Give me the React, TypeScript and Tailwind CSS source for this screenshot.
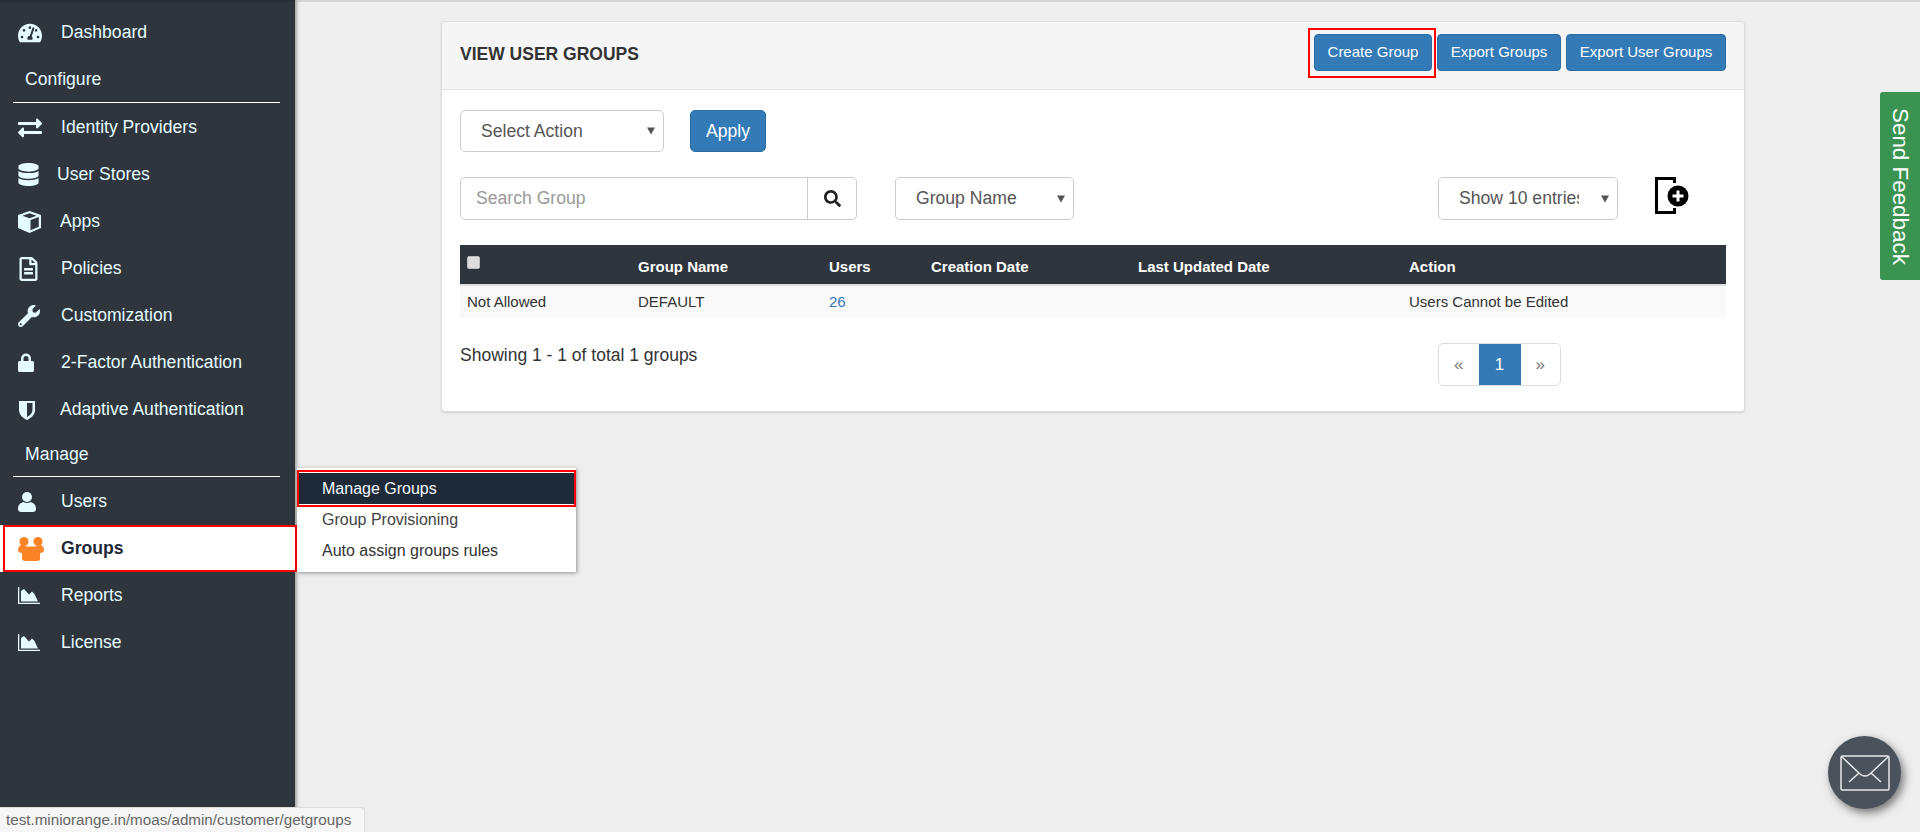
import React from "react";
import { FaTachometerAlt, FaExchangeAlt, FaDatabase, FaRegFileAlt, FaWrench, FaSearch } from "react-icons/fa";

const FONT = "font-['Liberation_Sans',Arial,sans-serif]";

function ShieldIcon({ className }: { className?: string }) {
  return (
    <svg viewBox="0 0 16 20" className={className} fill="currentColor">
      <path d="M0 1h16v9c0 5-4 8-8 10-4-2-8-5-8-10V1zm8 2v14c3-1.6 5.5-3.8 5.5-7V3H8z" />
    </svg>
  );
}

function CubeIcon({ className }: { className?: string }) {
  return (
    <svg viewBox="0 0 23 22" className={className} fill="currentColor">
      <path d="M11.500 0 23 4v13l-11.500 5L0 17V4l11.500-4zm0 2.300L4.500 4.700l7 2.600 7-2.600-7-2.400zM12.500 9v10.300l8.300-3.600V5.900L12.500 9z" fillRule="evenodd" />
    </svg>
  );
}

function LockIcon({ className }: { className?: string }) {
  return (
    <svg viewBox="0 0 16 19" className={className} fill="currentColor">
      <path d="M3 8V5.500a5 5 0 0 1 10 0V8h1.500A1.500 1.500 0 0 1 16 9.500v8a1.500 1.500 0 0 1-1.500 1.500h-13A1.500 1.500 0 0 1 0 17.500v-8A1.500 1.500 0 0 1 1.500 8H3zm2.500 0h5V5.500a2.500 2.500 0 0 0-5 0V8z" fillRule="evenodd" />
    </svg>
  );
}

function UserIcon({ className }: { className?: string }) {
  return (
    <svg viewBox="0 0 18 20" className={className} fill="currentColor">
      <ellipse cx="9" cy="5" rx="5" ry="5" />
      <path d="M0 17c0-4 2-6 5.500-7 2 1.300 5 1.300 7 0C16 11 18 13 18 17c0 2-1.500 3-3 3H3c-1.500 0-3-1-3-3z" />
    </svg>
  );
}

function AreaIcon({ className }: { className?: string }) {
  return (
    <svg viewBox="0 0 22 17" className={className} fill="currentColor">
      <path d="M0 0h1.300v15.700H22V17H0V0z" />
      <path d="M3 14.500V4l3-2 5 5.500L14 4.500l2.500 2.500 3.500 7.500H3z" />
    </svg>
  );
}

function GroupIcon({ className }: { className?: string }) {
  return (
    <svg viewBox="0 0 26 24" className={className} fill="currentColor">
      <circle cx="6" cy="4.500" r="4.500" />
      <circle cx="20" cy="4.500" r="4.500" />
      <path d="M0 13c0-3 2-5 4-5 2 .5 4 1.500 5 1.500h8c1 0 3-1 5-1.500 2 0 4 2 4 5 0 2-1.500 3-4 3v5.500c0 1.500-1 2.500-3 2.500H7c-2 0-3-1-3-2.500V16c-2.500 0-4-1-4-3z" />
    </svg>
  );
}

function NavItem({
  icon,
  label,
  textLeft = "pl-[61px]",
}: {
  icon: React.ReactNode;
  label: string;
  textLeft?: string;
}) {
  return (
    <div className="relative flex h-[47px] items-center text-[17.6px] text-[#e4fbff]">
      <span className="absolute left-[18px] flex h-[47px] items-center">{icon}</span>
      <span className={textLeft}>{label}</span>
    </div>
  );
}

function SectionTitle({ label, className }: { label: string; className?: string }) {
  return (
    <div className={`ml-[13px] mr-[15px] flex items-center border-b border-white pl-[12px] text-[17.6px] text-[#e4fbff] ${className ?? ""}`}>
      {label}
    </div>
  );
}

function Sidebar() {
  return (
    <aside className="relative z-10 flex h-[832px] w-[295px] shrink-0 flex-col bg-[#2f353d] pt-[9px] shadow-[2px_0_3px_rgba(0,0,0,0.3)]">
      <NavItem icon={<FaTachometerAlt className="size-[24px]" />} label="Dashboard" />
      <SectionTitle label="Configure" className="h-[47px]" />
      <div className="h-[1px]" />
      <NavItem icon={<FaExchangeAlt className="size-[24px]" />} label="Identity Providers" />
      <NavItem icon={<FaDatabase className="h-[23px] w-[21px]" />} label="User Stores" textLeft="pl-[57px]" />
      <NavItem icon={<CubeIcon className="h-[22px] w-[23px]" />} label="Apps" textLeft="pl-[60px]" />
      <NavItem icon={<FaRegFileAlt className="h-[24px] w-[21px]" />} label="Policies" />
      <NavItem icon={<FaWrench className="size-[22px]" />} label="Customization" />
      <NavItem icon={<LockIcon className="h-[19px] w-[16px]" />} label="2-Factor Authentication" />
      <NavItem icon={<ShieldIcon className="h-[20px] w-[18px]" />} label="Adaptive Authentication" textLeft="pl-[60px]" />
      <SectionTitle label="Manage" className="h-[44px]" />
      <div className="h-[1px]" />
      <NavItem icon={<UserIcon className="h-[20px] w-[18px]" />} label="Users" />
      <div className="-mr-[2px] h-[47px] bg-white pl-[3px]">
        <div className="relative flex h-full items-center border-[2px] border-[#f00] text-[17.6px] font-bold text-[#1f2a38]">
          <GroupIcon className="absolute left-[13px] h-[24px] w-[26px] text-[#fc8426]" />
          <span className="pl-[56px]">Groups</span>
        </div>
      </div>
      <NavItem icon={<AreaIcon className="h-[17px] w-[22px]" />} label="Reports" />
      <NavItem icon={<AreaIcon className="h-[17px] w-[22px]" />} label="License" />
    </aside>
  );
}

function Flyout() {
  return (
    <div className="absolute left-[297px] top-[468px] z-20 h-[104px] w-[279px] bg-white text-[16px] shadow-[1px_1px_4px_rgba(0,0,0,0.4)]">
      <div className="mt-[2px] h-[37px] border-[2px] border-[#f00] bg-white py-[1px]">
        <div className="flex h-full items-center bg-[#1e2a38] pl-[23px] text-[#f4fbff]">Manage Groups</div>
      </div>
      <div className="-mt-[3px] flex h-[31px] items-center pl-[25px] text-[#444]">Group Provisioning</div>
      <div className="flex h-[31px] items-center pl-[25px] text-[#333]">Auto assign groups rules</div>
    </div>
  );
}

function BlueButton({ label, className }: { label: string; className?: string }) {
  return (
    <button
      type="button"
      className={`h-[37px] rounded-[4px] border border-[#2e6da4] bg-[#337ab7] text-[15px] text-white ${className ?? ""}`}
    >
      {label}
    </button>
  );
}

function SelectBox({ label, className, clip }: { label: string; className?: string; clip?: boolean }) {
  return (
    <div className={`relative flex items-center rounded-[5px] border border-[#ccc] bg-white pl-[20px] text-[17.6px] text-[#555] ${className ?? ""}`}>
      <span className={clip ? "w-[120px] overflow-hidden whitespace-nowrap" : "whitespace-nowrap"}>{label}</span>
      <span className="absolute right-[8px] top-1/2 h-0 w-0 -translate-y-1/2 border-x-[4px] border-t-[7px] border-x-transparent border-t-[#555]" />
    </div>
  );
}

function AddFileIcon() {
  return (
    <svg viewBox="0 0 34 37" className="h-[37px] w-[34px]">
      <path d="M19.500 6V1.500H1.500v34h18V31" fill="none" stroke="#000" strokeWidth="3" />
      <circle cx="23" cy="19" r="10.500" fill="#000" />
      <path d="M23 13.500v11M17.500 19h11" stroke="#fff" strokeWidth="3" />
    </svg>
  );
}

function Card() {
  return (
    <section className="relative flex h-[391px] w-[1304px] flex-col rounded-[4px] border border-[#ddd] bg-white shadow-[0_1px_2px_rgba(0,0,0,0.12)]">
      <header className="flex h-[68px] items-center justify-between rounded-t-[4px] border-b border-[#e0e0e0] bg-[#f5f5f5] px-[18px] pb-[4px]">
        <h1 className="mt-[1px] text-[17.5px] font-bold text-[#333]">VIEW USER GROUPS</h1>
        <div className="mb-[3px] flex gap-[5px]">
          <div className="relative">
            <BlueButton label="Create Group" className="w-[118px]" />
            <div className="absolute -bottom-[7px] -left-[6px] -right-[4px] -top-[6px] border-[2px] border-[#f00]" />
          </div>
          <BlueButton label="Export Groups" className="w-[124px]" />
          <BlueButton label="Export User Groups" className="w-[160px]" />
        </div>
      </header>
      <div className="flex flex-col px-[18px] pt-[20px]">
        <div className="flex h-[42px] gap-[26px]">
          <SelectBox label="Select Action" className="w-[204px]" />
          <button type="button" className="w-[76px] rounded-[5px] border border-[#2e6da4] bg-[#337ab7] text-[17.6px] text-white">
            Apply
          </button>
        </div>
        <div className="mt-[25px] flex h-[43px] items-start">
          <div className="flex h-[43px] w-[397px] rounded-[5px] border border-[#ccc] bg-white">
            <span className="flex-1 self-center pl-[15px] text-[17.6px] text-[#999]">Search Group</span>
            <span className="flex w-[49px] items-center justify-center border-l border-[#ccc]">
              <FaSearch className="size-[17px] text-[#222]" />
            </span>
          </div>
          <SelectBox label="Group Name" className="ml-[38px] h-[43px] w-[179px]" />
          <SelectBox label="Show 10 entries" className="ml-[364px] h-[43px] w-[180px]" clip />
          <div className="ml-[37px]">
            <AddFileIcon />
          </div>
        </div>
        <table className="mt-[25px] w-[1266px] table-fixed border-collapse text-[15px]">
          <thead>
            <tr className="h-[40px] border-b-[2px] border-[#ddd] bg-[#2f353d] text-left font-bold text-white">
              <th className="w-[177px] pl-[7px]">
                <span className="mb-[4px] block h-[13px] w-[13px] rounded-[2px] border border-[#bbb] bg-[#ddd]" />
              </th>
              <th className="w-[192px] pl-[1px] pt-[5px]">Group Name</th>
              <th className="w-[102px] pt-[5px]">Users</th>
              <th className="w-[207px] pt-[5px]">Creation Date</th>
              <th className="w-[271px] pt-[5px]">Last Updated Date</th>
              <th className="pt-[5px]">Action</th>
            </tr>
          </thead>
          <tbody>
            <tr className="h-[33px] bg-[#f9f9f9] text-[#333]">
              <td className="pl-[7px]">Not Allowed</td>
              <td className="pl-[1px]">DEFAULT</td>
              <td className="text-[#337ab7]">26</td>
              <td />
              <td />
              <td>Users Cannot be Edited</td>
            </tr>
          </tbody>
        </table>
        <div className="mt-[25px] flex items-start justify-between">
          <span className="text-[17.5px] leading-[24px] text-[#333]">Showing 1 - 1 of total 1 groups</span>
          <div className="mr-[165px] flex h-[43px] w-[123px] overflow-hidden rounded-[5px] border border-[#ddd] text-[17px]">
            <span className="flex flex-1 items-center justify-center text-[#777]">«</span>
            <span className="flex w-[42px] items-center justify-center bg-[#337ab7] text-white">1</span>
            <span className="flex flex-1 items-center justify-center text-[#777]">»</span>
          </div>
        </div>
      </div>
    </section>
  );
}

export default function App() {
  return (
    <div className={`relative flex h-[832px] w-[1920px] overflow-hidden bg-[#eeeeee] ${FONT}`}>
      <Sidebar />
      <main className="pl-[146px] pt-[21px]">
        <Card />
      </main>
      <Flyout />
      <div className="absolute inset-x-0 top-0 z-30 h-[2px] bg-black/10" />
      <div className="absolute right-0 top-[92px] flex h-[188px] w-[40px] items-center justify-center rounded-l-[3px] bg-[#3a9350] text-[22.4px] text-white [writing-mode:vertical-rl]">
        Send Feedback
      </div>
      <div className="absolute left-[1828px] top-[736px] flex size-[73px] items-center justify-center rounded-full bg-[#4a535c] shadow-[3px_4px_8px_rgba(0,0,0,0.5)]">
        <svg viewBox="0 0 50 36" className="h-[36px] w-[50px]" fill="none" stroke="#e8eaec" strokeWidth="1.5">
          <rect x="1" y="1" width="48" height="34" rx="1.5" />
          <path d="M1.500 1.500 20 19c3 2.500 7 2.500 10 0L48.500 1.500M9 27l10-9M41 27l-10-9" />
        </svg>
      </div>
      <div className="absolute bottom-0 left-0 z-30 flex h-[25px] w-[365px] items-center rounded-tr-[4px] border-r border-t border-[#ddd] bg-[#f6f6f6] pl-[6px] text-[15.2px] text-[#666]">
        test.miniorange.in/moas/admin/customer/getgroups
      </div>
    </div>
  );
}
